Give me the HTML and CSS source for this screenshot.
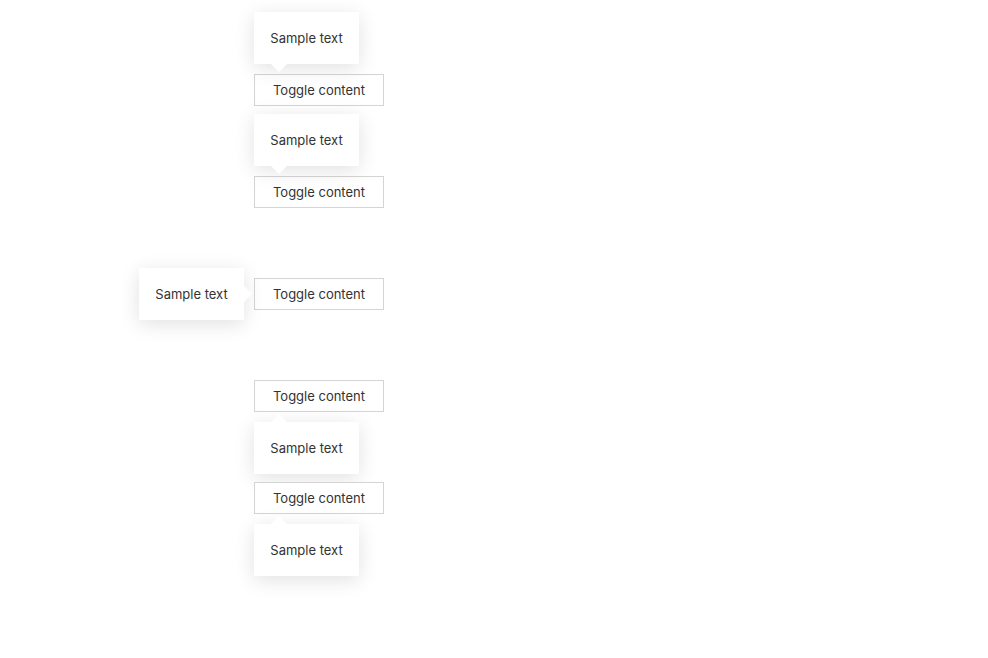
FILE: index.html
```html
<!DOCTYPE html>
<html lang="en">
<head>
    <meta charset="UTF-8">
    <meta name="viewport" content="width=device-width, initial-scale=1.0">
    <title>Popovers</title>
    <link rel="stylesheet" href="styles.css">
</head>
<body>
    <div class="stack">
        <div class="anchor">
            <div class="popover popover-top">Sample text</div>
            <button class="toggle">Toggle content</button>
        </div>
        <div class="anchor">
            <div class="popover popover-top">Sample text</div>
            <button class="toggle">Toggle content</button>
        </div>
        <div class="anchor">
            <div class="popover popover-left">Sample text</div>
            <button class="toggle">Toggle content</button>
        </div>
        <div class="anchor">
            <button class="toggle">Toggle content</button>
            <div class="popover popover-bottom">Sample text</div>
        </div>
        <div class="anchor">
            <button class="toggle">Toggle content</button>
            <div class="popover popover-bottom">Sample text</div>
        </div>
    </div>
</body>
</html>
```

FILE: styles.css
```css
html, body { height: 100%; }
body { margin: 0; font-family: Inter, "Noto Sans", sans-serif; background: #fff; color: #333; }
.stack { display: flex; flex-direction: column; gap: 70px; padding: 74px 0 120px 254px; }
.anchor { position: relative; width: 130px; height: 32px; }
.toggle { display: block; width: 130px; height: 32px; margin: 0; padding: 0; background: #fff; border: 1px solid #d4d4d4; font-family: inherit; font-size: 13px; color: #333; }
.popover { position: absolute; box-sizing: border-box; width: 105px; height: 52px; padding: 0 16px; display: flex; align-items: center; justify-content: center; background: #fff; font-size: 13px; white-space: nowrap; box-shadow: 0 4px 20px rgba(0, 0, 0, 0.12); }
.popover::after { content: ""; position: absolute; width: 0; height: 0; border: 8px solid transparent; }
.popover-top { left: 0; bottom: 42px; }
.popover-top::after { top: 100%; left: 17px; border-top-color: #fff; border-bottom: 0; }
.popover-bottom { left: 0; top: 42px; }
.popover-bottom::after { bottom: 100%; left: 17px; border-bottom-color: #fff; border-top: 0; }
.popover-left { right: 140px; top: -10px; }
.popover-left::after { left: 100%; top: 18px; border-left-color: #fff; border-right: 0; }
```
